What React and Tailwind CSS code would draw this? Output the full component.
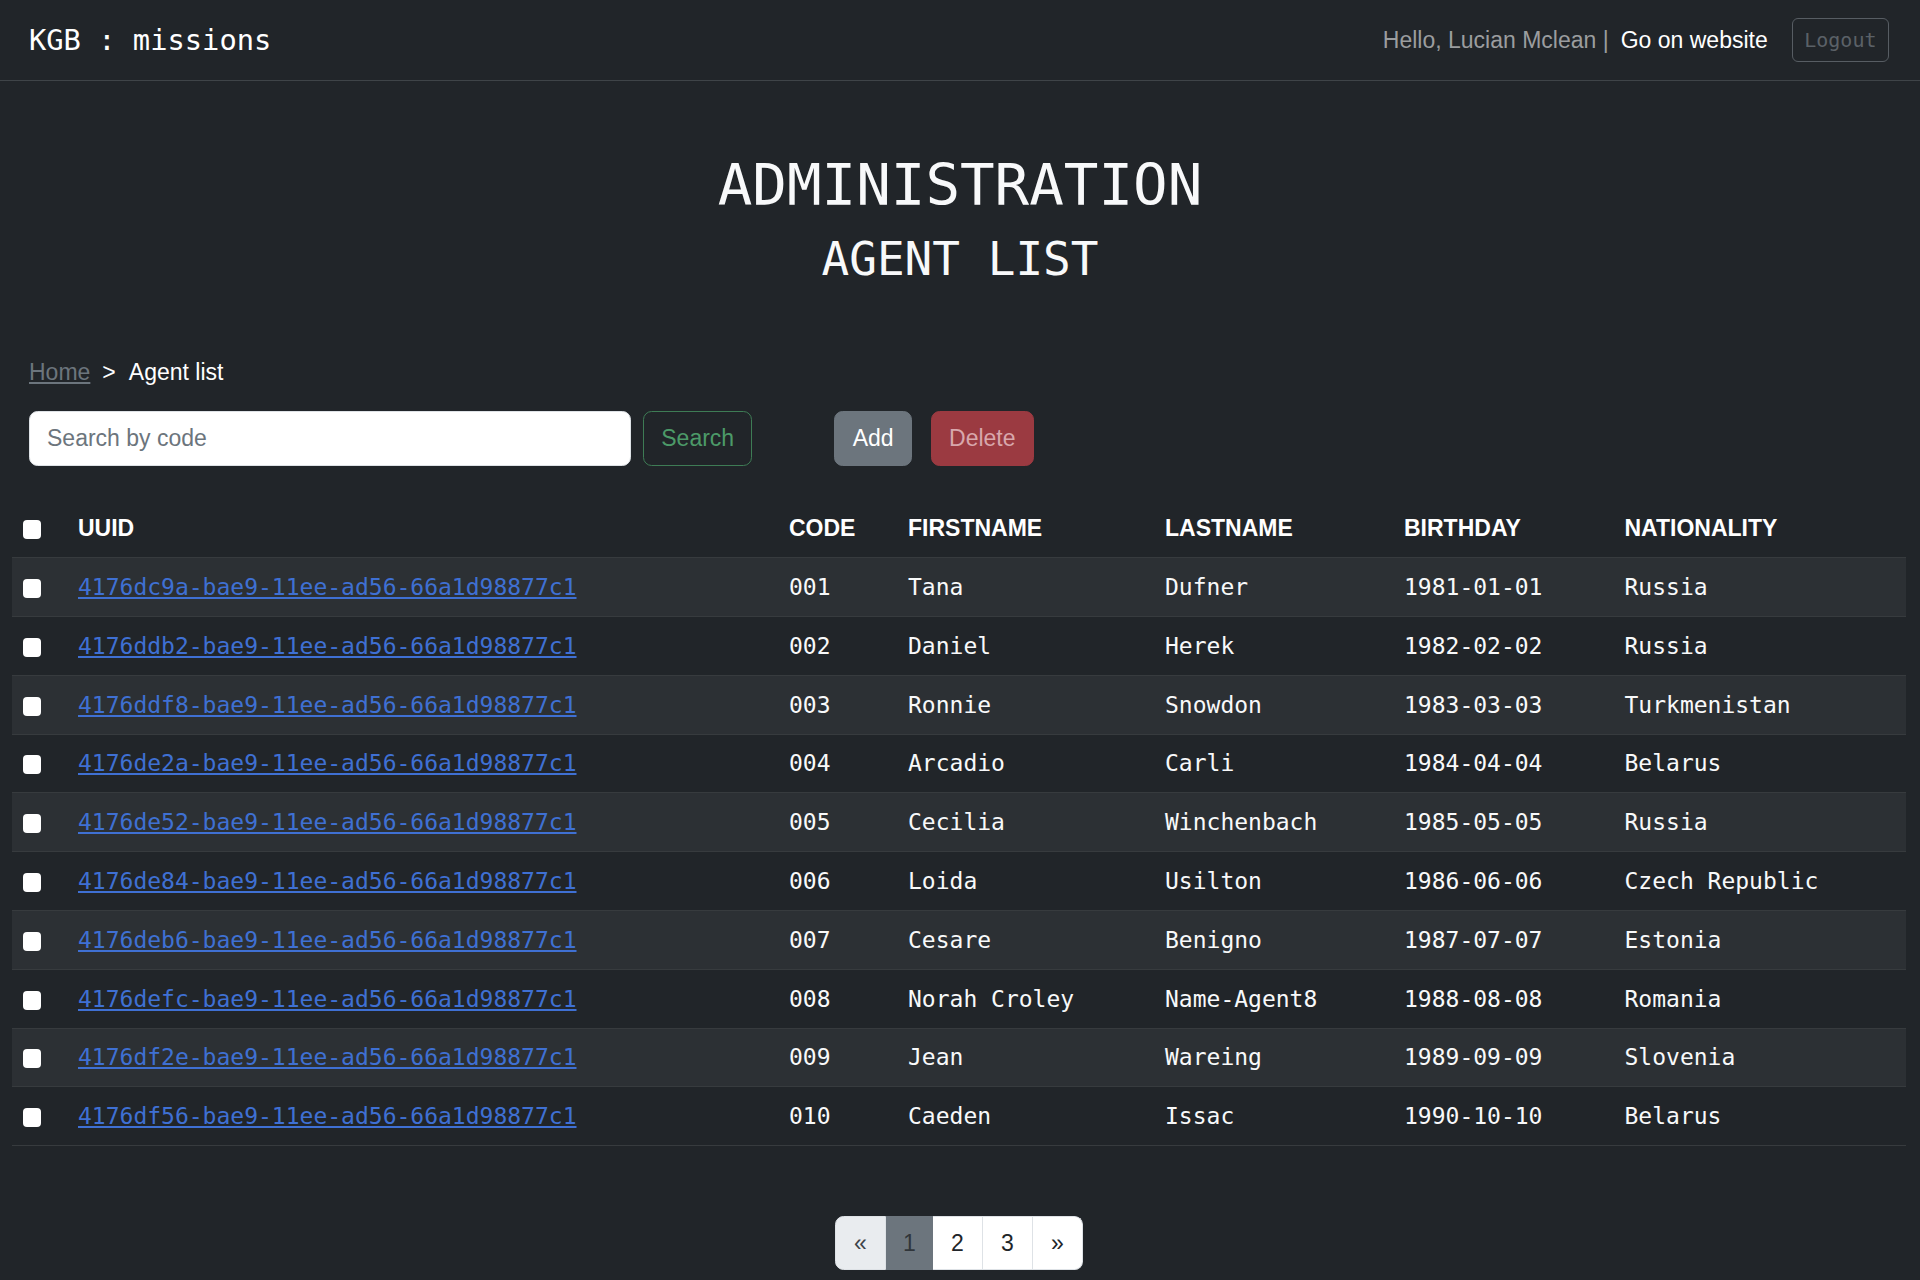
import React from "react";

const MONO = { fontFamily: '"DejaVu Sans Mono", monospace' };

const rows = [
  ["4176dc9a-bae9-11ee-ad56-66a1d98877c1", "001", "Tana", "Dufner", "1981-01-01", "Russia"],
  ["4176ddb2-bae9-11ee-ad56-66a1d98877c1", "002", "Daniel", "Herek", "1982-02-02", "Russia"],
  ["4176ddf8-bae9-11ee-ad56-66a1d98877c1", "003", "Ronnie", "Snowdon", "1983-03-03", "Turkmenistan"],
  ["4176de2a-bae9-11ee-ad56-66a1d98877c1", "004", "Arcadio", "Carli", "1984-04-04", "Belarus"],
  ["4176de52-bae9-11ee-ad56-66a1d98877c1", "005", "Cecilia", "Winchenbach", "1985-05-05", "Russia"],
  ["4176de84-bae9-11ee-ad56-66a1d98877c1", "006", "Loida", "Usilton", "1986-06-06", "Czech Republic"],
  ["4176deb6-bae9-11ee-ad56-66a1d98877c1", "007", "Cesare", "Benigno", "1987-07-07", "Estonia"],
  ["4176defc-bae9-11ee-ad56-66a1d98877c1", "008", "Norah Croley", "Name-Agent8", "1988-08-08", "Romania"],
  ["4176df2e-bae9-11ee-ad56-66a1d98877c1", "009", "Jean", "Wareing", "1989-09-09", "Slovenia"],
  ["4176df56-bae9-11ee-ad56-66a1d98877c1", "010", "Caeden", "Issac", "1990-10-10", "Belarus"],
];

function Box() {
  return <span className="inline-block w-[18px] h-[19px] bg-white rounded-[4px] align-middle" />;
}

export default function App() {
  return (
    <div
      className="min-h-screen bg-[#212529] text-[#f8f9fa] text-[23px]"
      style={{ fontFamily: '"Liberation Sans", Arial, sans-serif' }}
    >
      {/* Navbar */}
      <nav className="h-[81px] border-b border-[#3f4448] flex items-center justify-between pl-[29px] pr-[31px]">
        <div className="text-[28.75px] leading-none text-white" style={MONO}>
          KGB : missions
        </div>
        <div className="flex items-center">
          <span className="text-[#9b9d9f]">Hello, Lucian Mclean |</span>
          <span className="ml-[12px] text-white">Go on website</span>
          <button
            className="ml-[24px] h-[44px] px-[11.5px] border border-[#575d63] rounded-[6px] text-[20px] text-[#5b6167]"
            style={MONO}
          >
            Logout
          </button>
        </div>
      </nav>

      {/* Titles */}
      <div className="pt-[70px] text-center" style={MONO}>
        <h1 className="text-[57.5px] leading-[1.2] mb-[11.5px] text-[#f8f9fa]">ADMINISTRATION</h1>
        <h2 className="text-[46px] leading-[1.2] text-[#f8f9fa]">AGENT LIST</h2>
      </div>

      <main className="pl-3 pr-[14px]">
        {/* Breadcrumb */}
        <div className="mt-[68px] pl-[17px] leading-[34.5px] flex items-center">
          <a className="text-[#6c757d] underline decoration-[#6c757d]">Home</a>
          <span className="ml-[12px] text-white">&gt;</span>
          <span className="ml-[13px] text-white">Agent list</span>
        </div>

        {/* Search row */}
        <div className="mt-[22px] pl-[17px] flex items-center h-[55px]">
          <div className="w-[602px] h-[55px] bg-white rounded-[8.6px] border border-[#dee2e6] flex items-center pl-[17px] text-[#6c757d]">
            Search by code
          </div>
          <button className="ml-[12px] h-[55px] px-[17.25px] rounded-[8.6px] border border-[#3e7c55] text-[#4c9a68]">
            Search
          </button>
          <button className="ml-[82px] h-[55px] px-[17.25px] rounded-[8.6px] border border-[#6c757d] bg-[#6c757d] text-white">
            Add
          </button>
          <button className="ml-[19px] h-[55px] px-[17.25px] rounded-[8.6px] border border-[#9b3a41] bg-[#9b3a41] text-[#d8a7ac]">
            Delete
          </button>
        </div>

        {/* Table */}
        <table className="mt-[33px] w-full table-fixed border-collapse">
          <colgroup>
            <col className="w-[54.5px]" />
            <col className="w-[711px]" />
            <col className="w-[119px]" />
            <col className="w-[257px]" />
            <col className="w-[239px]" />
            <col className="w-[220.5px]" />
            <col />
          </colgroup>
          <thead>
            <tr className="h-[58.6px] border-b border-[#373b3e]">
              <th className="pl-[11px] text-left align-middle">
                <Box />
              </th>
              {["UUID", "CODE", "FIRSTNAME", "LASTNAME", "BIRTHDAY", "NATIONALITY"].map((h) => (
                <th key={h} className="px-[11.5px] text-left font-bold text-white align-middle">
                  {h}
                </th>
              ))}
            </tr>
          </thead>
          <tbody style={MONO}>
            {rows.map((r, i) => (
              <tr
                key={r[1]}
                className={
                  "h-[58.8px] border-b border-[#373b3e] " + (i % 2 === 0 ? "bg-[#2c3034]" : "")
                }
              >
                <td className="pl-[11px] align-middle">
                  <Box />
                </td>
                <td className="px-[11.5px] align-middle whitespace-nowrap">
                  <a className="text-[#3f70d3] underline decoration-[#3f70d3]">{r[0]}</a>
                </td>
                {r.slice(1).map((c, j) => (
                  <td key={j} className="px-[11.5px] align-middle whitespace-nowrap text-[#f8f9fa]">
                    {c}
                  </td>
                ))}
              </tr>
            ))}
          </tbody>
        </table>

        {/* Pagination */}
        <div className="mt-[70px] flex justify-center pb-[10px]">
          <div className="flex h-[54px] text-[23px]">
            <span className="w-[51px] flex items-center justify-center bg-[#e9ecef] text-[#3d4349] border border-[#dee2e6] rounded-l-[8.6px]">
              «
            </span>
            <span className="w-[47px] flex items-center justify-center bg-[#6c757d] text-[#30353a] border border-[#6c757d]">
              1
            </span>
            <span className="w-[50px] flex items-center justify-center bg-white text-[#212529] border border-[#dee2e6] border-l-0">
              2
            </span>
            <span className="w-[50px] flex items-center justify-center bg-white text-[#212529] border border-[#dee2e6] border-l-0">
              3
            </span>
            <span className="w-[50px] flex items-center justify-center bg-white text-[#212529] border border-[#dee2e6] border-l-0 rounded-r-[8.6px]">
              »
            </span>
          </div>
        </div>
      </main>
    </div>
  );
}
